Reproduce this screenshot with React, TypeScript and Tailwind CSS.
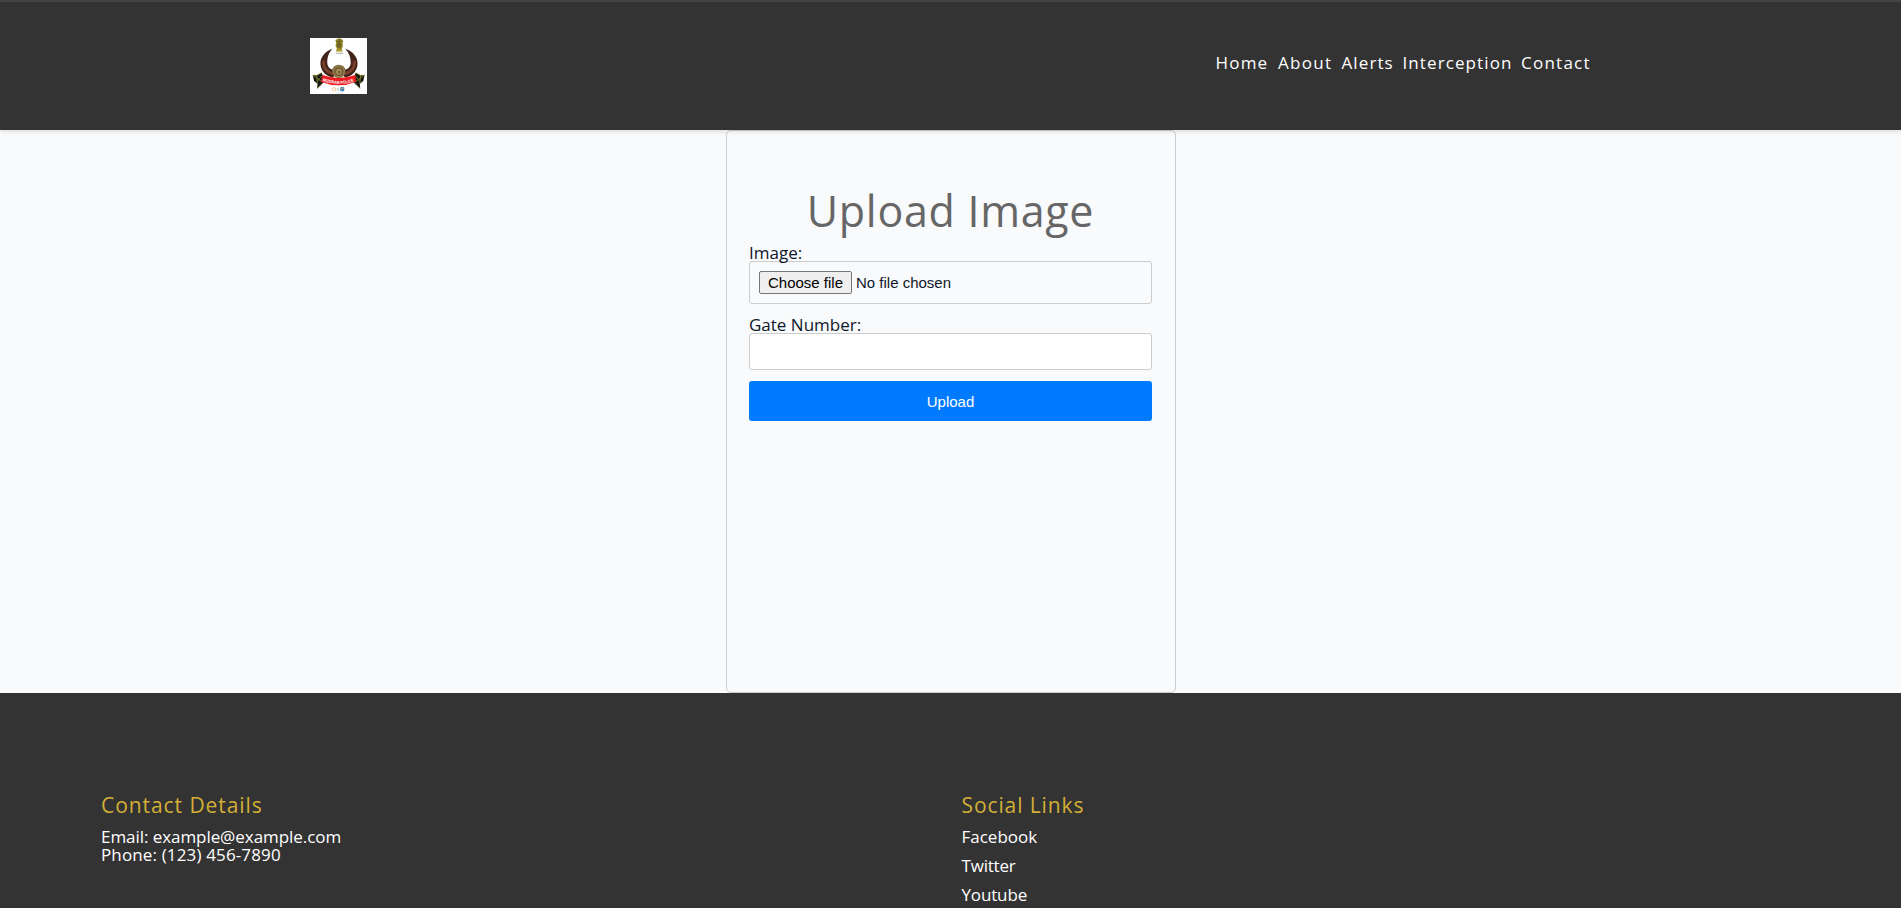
function Crest() {
  return (
    <svg className="block h-14 w-[57px]" viewBox="0 0 168 168" preserveAspectRatio="none" role="img">
      <rect width="168" height="168" fill="#fff" />
      {/* lion capital */}
      <path d="M75 7l5-4 6-2 7 2 5 5-2 9 1 8-3 5v6H79v-6l-4-6 2-8z" fill="#8f8228" />
      <path d="M80 8l3 6M92 8l-3 6M86 5v22M79 20h14M80 27h12" stroke="#4b4716" strokeWidth="2" />
      <path d="M77 34h18v7H77z" fill="#b3a233" />
      <path d="M76 46h21" stroke="#a9a9a0" strokeWidth="3" />
      {/* horns */}
      <path d="M66 32C42 41 29 60 31 80c2 21 18 36 38 38l9-22c-16 1-26-7-27-20-1-15 3-31 15-44z" fill="#43241b" />
      <path d="M104 32c25 9 38 28 36 48-2 21-18 36-38 38l-9-22c16 1 26-7 27-20 1-15-4-31-16-44z" fill="#43241b" />
      <path d="M40 68c-2 18 8 33 28 40" fill="none" stroke="#7d422d" strokeWidth="7" />
      <path d="M131 68c2 18-8 33-28 40" fill="none" stroke="#7d422d" strokeWidth="7" />
      <path d="M45 58l2 27 20 17M126 58l-2 27-20 17" fill="none" stroke="#532a1e" strokeWidth="3" strokeDasharray="5 4" />
      {/* gong */}
      <circle cx="85" cy="100" r="20" fill="#77623a" />
      <circle cx="85" cy="100" r="16" fill="none" stroke="#ad965b" strokeWidth="2" />
      <circle cx="85" cy="101" r="8" fill="#a68f57" />
      <circle cx="86" cy="102" r="3" fill="#4c3b21" />
      {/* ribbon tails */}
      <path d="M8 111l12 1 14-8 9 20-5 12-17 16 1-15-10-8z" fill="#171916" />
      <path d="M161 111l-12 1-14-8-9 20 5 12 17 16-1-15 10-8z" fill="#171916" />
      <path d="M8 111l12 1 14-8M20 112l2 26M9 112l27 20M36 112l-14 18M21 151l17-16" fill="none" stroke="#b9b53a" strokeWidth="1.6" />
      <path d="M161 111l-12 1-14-8M149 112l-2 26M160 112l-27 20M133 112l14 18M148 151l-17-16" fill="none" stroke="#b9b53a" strokeWidth="1.6" />
      <path d="M37 111q48 18 96 0l3 20q-51 22-104 0z" fill="#ed1c20" />
      <path id="ribbon" d="M37 129q48 18 98 0" fill="none" />
      <text fill="#fff" fontFamily="Liberation Sans, sans-serif" fontSize="13" fontWeight="700">
        <textPath href="#ribbon" textLength="94" lengthAdjust="spacingAndGlyphs">MIZORAM POLICE</textPath>
      </text>
      {/* small badge under the ribbon */}
      <circle cx="71" cy="154" r="5" fill="none" stroke="#f0a868" strokeWidth="2" />
      <path d="M86 149l-7 5 7 5" fill="none" stroke="#8fc08d" strokeWidth="2" />
      <rect x="89" y="147" width="12" height="13" rx="3" fill="#3f87b5" />
      <path d="M91 151h8" stroke="#f2c36b" strokeWidth="2" />
      <path d="M75 165h22" stroke="#cfe0ea" strokeWidth="2" />
    </svg>
  );
}

function Header() {
  return (
    <header className="relative flex h-[130px] items-start border-t-2 border-[#444] bg-[#333] pt-9 pl-[310px] shadow-[0_2px_4px_rgba(0,0,0,0.1)]">
      <Crest />
      <nav className="mt-[13px] ml-[848.5px] flex text-[17px] leading-6 whitespace-nowrap text-white">
        <a className="w-[62.5px] tracking-[1.2px]">Home</a>
        <a className="w-[63.5px] tracking-[1.3px]">About</a>
        <a className="w-[61px] tracking-[1.1px]">Alerts</a>
        <a className="w-[118.5px] tracking-[1.1px]">Interception</a>
        <a className="tracking-[1.25px]">Contact</a>
      </nav>
    </header>
  );
}

function UploadForm() {
  return (
    <form className="mx-auto h-[563px] w-[450px] rounded-[5px] border border-[#ccc] px-[22.5px] pt-[57px] text-[#0f172a]">
      <h1 className="h-14 text-center text-[43px] leading-[45px] tracking-[0.7px] text-[#666]">Upload Image</h1>
      <label className="block h-[17px] text-[17px] leading-[18px]">Image:</label>
      <div className="flex h-[43px] items-center rounded-[3px] border border-[#ccc] pl-[9px] font-['Liberation_Sans',sans-serif] text-[15px]">
        <button type="button" className="h-[23px] w-[93px] rounded-[2px] border border-[#767676] bg-[#efefef] leading-[21px] text-black">
          Choose file
        </button>
        <span className="ml-1 leading-[21px]">No file chosen</span>
      </div>
      <label className="mt-3 block h-[17px] text-[17px] leading-[18px]">Gate Number:</label>
      <input className="block h-[37px] w-full rounded-[3px] border border-[#ccc] bg-white px-2" />
      <button type="button" className="mt-[11px] block h-10 w-full rounded-[3px] bg-[#007bff] pt-0.5 font-['Liberation_Sans',sans-serif] text-[15px] text-white">
        Upload
      </button>
    </form>
  );
}

function Footer() {
  return (
    <footer className="flex h-[215px] overflow-hidden bg-[#333] pt-[98px] pl-[101px] text-[17px] text-white">
      <section className="w-[860.5px]">
        <h2 className="h-[31px] text-[21px] leading-7 tracking-[0.94px] text-[#d4af37]">Contact Details</h2>
        <p className="mt-[6px] leading-[18px] tracking-[-0.06px]">Email: example@example.com</p>
        <p className="leading-[18px] tracking-[0.14px]">Phone: (123) 456-7890</p>
      </section>
      <section>
        <h2 className="h-[31px] text-[21px] leading-7 tracking-[0.9px] text-[#d4af37]">Social Links</h2>
        <ul className="leading-[29px]">
          <li>Facebook</li>
          <li className="tracking-[-0.2px]">Twitter</li>
          <li className="tracking-[-0.15px]">Youtube</li>
        </ul>
      </section>
    </footer>
  );
}

export default function App() {
  return (
    <div className="h-[908px] overflow-hidden bg-[#f8fafc] font-['Open_Sans',sans-serif]">
      <Header />
      <main>
        <UploadForm />
      </main>
      <Footer />
    </div>
  );
}
